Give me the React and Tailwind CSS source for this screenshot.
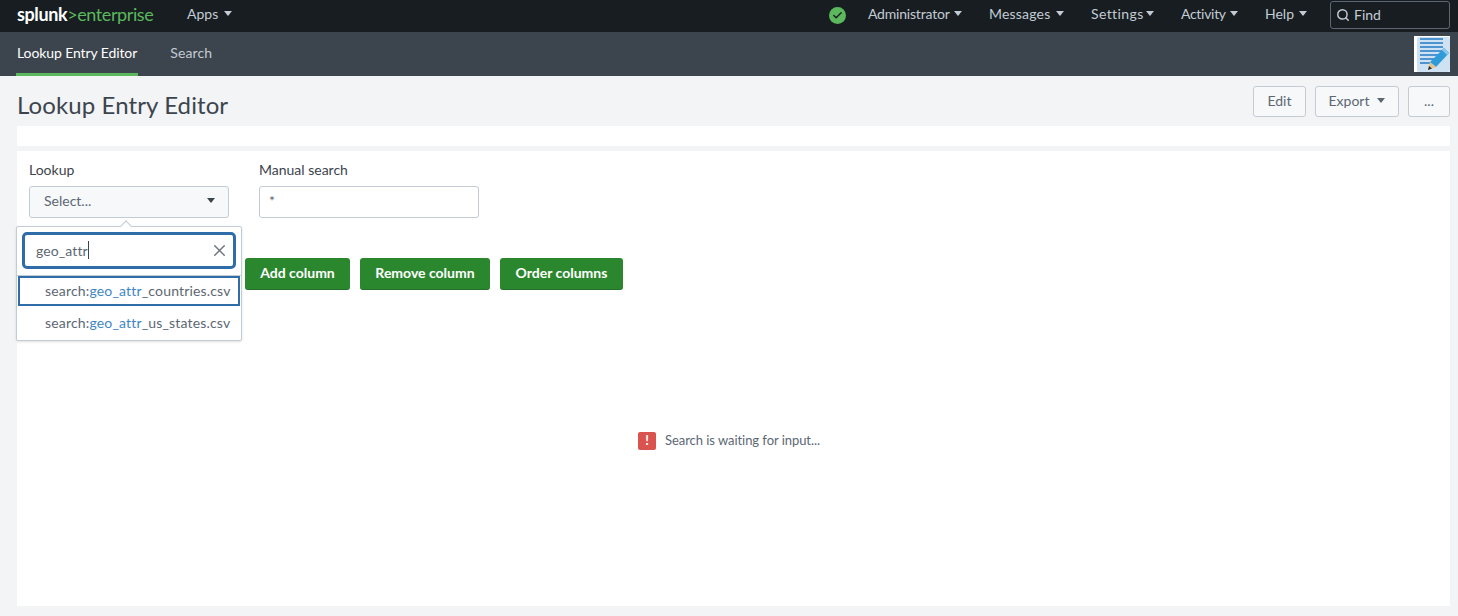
import { Search, X, Check } from 'lucide-react'

const font = 'font-["Lato","Open_Sans",sans-serif]'

function Caret({ className = 'border-t-[#c3cbd4]' }) {
  return <span className={`inline-block w-0 h-0 border-x-[4.5px] border-x-transparent border-t-[5px] ${className}`} />
}

function NavItem({ children, className = '' }) {
  return (
    <div className={`flex items-center justify-between pb-[6px] text-[14px] text-[#c3cbd4] ${className}`}>
      {children}
      <Caret />
    </div>
  )
}

function EditorIcon() {
  return (
    <div className="w-9 h-9 bg-white">
      <svg width="36" height="36" viewBox="0 0 36 36">
        <rect x="3" y="1" width="33" height="35" rx="2" fill="#cfe2f3" />
        <path d="M6 3h23M6 7h23M6 11h23M6 15h23M6 19h23M6 23h19M6 27h12" stroke="#4d94d0" strokeWidth="2" />
        <path d="M30 12l5 5-13 14-6-5z" fill="#2f9bd8" />
        <path d="M30 12l5 5-2 2-5-5z" fill="#8cc6ea" />
        <path d="M16 26l6 5-8 3z" fill="#e3c48f" />
        <path d="M15 30l3 2.500-4 1.500z" fill="#2b2b2b" />
      </svg>
    </div>
  )
}

function OutlineButton({ children, className = '' }) {
  return (
    <button className={`h-[31px] pb-[2px] rounded-[3px] border border-[#c3cbd4] bg-[#f7f8fa] text-[14px] text-[#5c6773] flex items-center justify-center ${className}`}>
      {children}
    </button>
  )
}

function GreenButton({ children, className = '' }) {
  return (
    <button className={`h-8 pb-[3px] rounded-[3px] bg-[#2b872e] border-b border-[#24702a] text-[14px] font-bold text-white ${className}`}>
      {children}
    </button>
  )
}

function Option({ rest, selected }) {
  return (
    <div className={`h-[30px] mx-px pl-[25px] pb-[2px] flex items-center text-[14px] tracking-[0.17px] text-[#5c6773] whitespace-nowrap border-2 ${selected ? 'border-[#2f6ca8]' : 'border-transparent'}`}>
      search:<span className="text-[#3f86c4]">geo_attr</span>{rest}
    </div>
  )
}

export default function App() {
  return (
    <div className={`h-[616px] w-[1458px] overflow-hidden bg-[#f2f4f5] flex flex-col ${font}`}>
      <div className="h-8 bg-[#171d21] flex items-center shrink-0 pl-[17px] pr-2">
        <div className="w-[170px] pb-[5px] text-[18px] leading-none tracking-[-0.4px] flex">
          <span className="font-bold text-white">splunk</span>
          <span className="text-[#5cb85c]">&gt;enterprise</span>
        </div>
        <NavItem className="w-[45px]">Apps</NavItem>
        <div className="ml-auto flex items-center">
          <div className="w-[17px] h-[17px] mb-[2px] rounded-full bg-[#5cb85c] flex items-center justify-center mr-[22px]">
            <Check size={11} strokeWidth={3} className="text-[#171d21]" />
          </div>
          <div className="flex items-center gap-[27px]">
            <NavItem className="w-[94px] tracking-[-0.2px]">Administrator</NavItem>
            <NavItem className="w-[75px] tracking-[0.2px]">Messages</NavItem>
            <NavItem className="w-[63px] tracking-[0.4px]">Settings</NavItem>
            <NavItem className="w-[57px] tracking-[-0.3px]">Activity</NavItem>
            <NavItem className="w-[42px]">Help</NavItem>
          </div>
          <div className="ml-[23px] mb-[2px] w-[120px] h-[28px] rounded-[3px] border border-[#5c6773] flex items-center gap-[4px] pl-[5px] text-[14px] text-[#c3cbd4]">
            <Search size={14} strokeWidth={2.5} />
            <span className="pb-[2px]">Find</span>
          </div>
        </div>
      </div>

      <div className="h-11 bg-[#3c444d] flex items-stretch shrink-0 pl-4 pr-2">
        <div className="border-b-[3px] border-[#5cb85c] flex items-center px-px text-[14px] tracking-[-0.1px] text-white">Lookup Entry Editor</div>
        <div className="ml-[32px] pb-[3px] flex items-center text-[14px] tracking-[0.15px] text-[#c3cbd4]">Search</div>
        <div className="ml-auto self-center">
          <EditorIcon />
        </div>
      </div>

      <div className="flex items-start justify-between shrink-0 h-[50px] pl-[17px] pr-2 pt-[9px]">
        <h1 className="text-[24px] tracking-[0.1px] leading-[40px] text-[#3c444d] font-normal">Lookup Entry Editor</h1>
        <div className="flex gap-[9px] pt-px">
          <OutlineButton className="w-[53px]">Edit</OutlineButton>
          <OutlineButton className="w-[84px] gap-2">Export <Caret className="border-t-[#5c6773]" /></OutlineButton>
          <OutlineButton className="w-[42px]">...</OutlineButton>
        </div>
      </div>

      <div className="h-5 ml-[17px] mr-2 bg-white shrink-0" />
      <div className="flex-1 mt-[5px] mb-[10px] ml-[17px] mr-2 bg-white relative">
        <div className="flex gap-[30px] pl-3 pt-[10px]">
          <div className="w-[200px]">
            <div className="text-[14px] text-[#3c444d] leading-[18px] mb-[7px]">Lookup</div>
            <div className="h-8 pb-[3px] rounded-[3px] border border-[#c3cbd4] bg-[#f7f8fa] flex items-center justify-between pl-[14px] pr-[13px] text-[14px] text-[#5c6773]">
              Select...
              <Caret className="border-t-[#3c444d]" />
            </div>
          </div>
          <div className="w-[220px]">
            <div className="text-[14px] text-[#3c444d] leading-[18px] mb-[7px]">Manual search</div>
            <div className="h-8 rounded-[3px] border border-[#c3cbd4] bg-white pl-[9px] pt-[6px] text-[14px] leading-4 text-[#5c6773]">*</div>
          </div>
        </div>

        <div className="flex gap-[10px] ml-[228px] mt-[40px]">
          <GreenButton className="w-[105px]">Add column</GreenButton>
          <GreenButton className="w-[130px]">Remove column</GreenButton>
          <GreenButton className="w-[123px]">Order columns</GreenButton>
        </div>

        <div className="absolute -left-px top-[75px] w-[226px] h-[115px] bg-white border border-[#c3cbd4] rounded-[2px] shadow-sm">
          <div className="absolute -top-[5px] left-[105px] w-2 h-2 rotate-45 bg-white border-l border-t border-[#c3cbd4]" />
          <div className="h-[49px] border-b border-[#c3cbd4] px-[5px] pt-[5px]">
            <div className="h-[37px] rounded-[5px] border-[3px] border-[#2f6ca8] flex items-center justify-between pl-[11px] pr-[4px] text-[14px] tracking-[0.1px] text-[#5c6773]">
              <span className="flex items-center pb-px">geo_attr<span className="w-px h-[18px] bg-[#3c444d]" /></span>
              <X size={19} strokeWidth={1.8} className="text-[#6b7580]" />
            </div>
          </div>
          <Option rest="_countries.csv" selected />
          <div className="h-[2px]" />
          <Option rest="_us_states.csv" />
        </div>

        <div className="absolute left-[621px] top-[280px] flex items-center gap-[9px] text-[13px] text-[#5c6773]">
          <div className="w-[18px] h-[18px] rounded-[2px] bg-[#d9534f] flex items-center justify-center text-white text-[13px] font-bold leading-none">!</div>
          <span className="tracking-[-0.05px]">Search is waiting for input...</span>
        </div>
      </div>
    </div>
  )
}
